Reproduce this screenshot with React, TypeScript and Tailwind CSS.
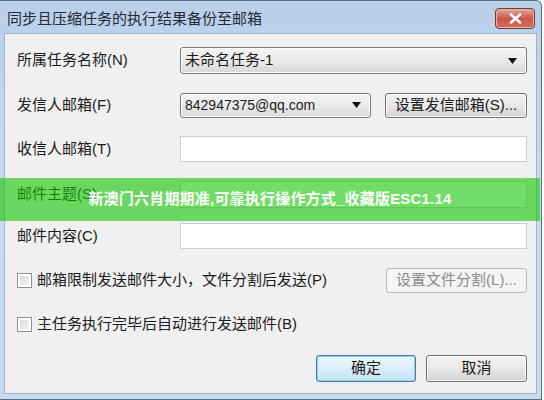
import React from "react";

const font = "font-['Liberation_Sans','Noto_Sans_CJK_SC',sans-serif]";

function Arrow() {
  return (
    <svg width="9" height="6" viewBox="0 0 9 6" aria-hidden="true">
      <path d="M0 0h9L4.5 6z" fill="#111" />
    </svg>
  );
}

function Combo({ value, className }: { value: string; className: string }) {
  return (
    <div
      className={`flex items-center justify-between rounded-[3px] border border-[#7a7a7a] bg-gradient-to-b from-[#f4f4f4] via-[#ebebeb] to-[#d8d8d8] pl-[4px] pr-[9px] shadow-[inset_0_0_0_1px_#fcfcfc] ${className}`}
    >
      <span className="text-[15px] text-[#1b1b1b]">{value}</span>
      <Arrow />
    </div>
  );
}

function Button({
  label,
  disabled,
  focused,
  className,
}: {
  label: string;
  disabled?: boolean;
  focused?: boolean;
  className: string;
}) {
  const look = disabled
    ? "border-[#b5b9bd] bg-[#f4f4f4] text-[#8a8a8a]"
    : focused
      ? "border-[#3d7bad] bg-gradient-to-b from-[#eaf6fd] via-[#dbeef9] to-[#c4e2f4] text-[#1b1b1b] shadow-[inset_0_0_0_1px_#98d1ef]"
      : "border-[#707070] bg-gradient-to-b from-[#f3f3f3] via-[#e8e8e8] to-[#d2d2d2] text-[#1b1b1b] shadow-[inset_0_0_0_1px_#fbfbfb]";
  return (
    <div
      className={`flex items-center justify-center rounded-[3px] border text-[15px] ${look} ${className}`}
    >
      {label}
    </div>
  );
}

function Field({ className }: { className: string }) {
  return <div className={`border border-[#c9ccd1] bg-white ${className}`} />;
}

function Label({ text }: { text: string }) {
  return <span className="w-[163px] shrink-0 text-[15px] text-[#1b1b1b]">{text}</span>;
}

function Check({ text }: { text: string }) {
  return (
    <div className="flex items-center gap-[5px]">
      <div className="h-[15px] w-[15px] border border-[#8f8f8f] bg-white p-[2px]">
        <div className="h-full w-full bg-gradient-to-br from-[#d9d9d9] to-[#f4f4f4]" />
      </div>
      <span className="text-[15px] text-[#1b1b1b]">{text}</span>
    </div>
  );
}

export default function App() {
  return (
    <div className={`relative h-[400px] w-[544px] overflow-hidden bg-white ${font}`}>
      <div className="flex h-[400px] w-[542px] flex-col rounded-tr-[6px] border-t border-r border-b border-[#5b6d80] bg-gradient-to-b from-[#b9d0e8] via-[#c9dbee] to-[#c6dbee]">
        <div className="flex h-[32px] shrink-0 items-start justify-between pl-[7px] pr-[6px]">
          <span className="pt-[8px] text-[15px] leading-[20px] text-[#1e2a36]">
            同步且压缩任务的执行结果备份至邮箱
          </span>
          <div className="mt-[7px] flex h-[21px] w-[40px] items-center justify-center rounded-[4px] border border-[#6e3a3a] bg-gradient-to-b from-[#e9a99c] via-[#c9574a] to-[#d0705f] shadow-[inset_0_0_0_1px_#eab3a8]">
            <svg width="13" height="11" viewBox="0 0 13 11" aria-hidden="true">
              <path d="M2 1.5l9 8M11 1.5l-9 8" stroke="#fff" strokeWidth="2.6" strokeLinecap="round" />
            </svg>
          </div>
        </div>
        <div className="mx-[4px] mb-[5px] flex flex-1 flex-col border border-[#9fb3c7] bg-[#f0f0f0] pl-[12px] pr-[9px]">
          <div className="mt-[13px] flex h-[27px] items-center">
            <Label text="所属任务名称(N)" />
            <Combo value="未命名任务-1" className="h-[27px] flex-1" />
          </div>
          <div className="mt-[19px] flex h-[24px] items-center">
            <Label text="发信人邮箱(F)" />
            <Combo value="842947375@qq.com" className="h-[25px] w-[191px] [&>span]:text-[14px]" />
            <Button label="设置发信邮箱(S)..." className="ml-[14px] h-[25px] flex-1" />
          </div>
          <div className="mt-[19px] flex h-[26px] items-center">
            <Label text="收信人邮箱(T)" />
            <Field className="h-[26px] flex-1" />
          </div>
          <div className="mt-[19px] flex h-[27px] items-center">
            <Label text="邮件主题(S)" />
            <Field className="h-[27px] flex-1" />
          </div>
          <div className="mt-[15px] flex h-[26px] items-center">
            <Label text="邮件内容(C)" />
            <Field className="h-[26px] flex-1" />
          </div>
          <div className="mt-[19px] flex h-[25px] items-center justify-between">
            <Check text="邮箱限制发送邮件大小，文件分割后发送(P)" />
            <Button label="设置文件分割(L)..." disabled className="h-[25px] w-[141px]" />
          </div>
          <div className="mt-[21px] flex h-[20px] items-center">
            <Check text="主任务执行完毕后自动进行发送邮件(B)" />
          </div>
          <div className="mt-[21px] flex h-[27px] items-center justify-end gap-[10px]">
            <Button label="确定" focused className="h-[27px] w-[100px]" />
            <Button label="取消" className="h-[27px] w-[101px]" />
          </div>
        </div>
      </div>
      <div className="absolute left-0 top-[178px] flex h-[43px] w-[540px] items-center justify-center bg-[#14c600]/60">
        <span className="text-[15px] font-bold tracking-[0.2px] text-white">
          新澳门六肖期期准,可靠执行操作方式_收藏版ESC1.14
        </span>
      </div>
    </div>
  );
}
